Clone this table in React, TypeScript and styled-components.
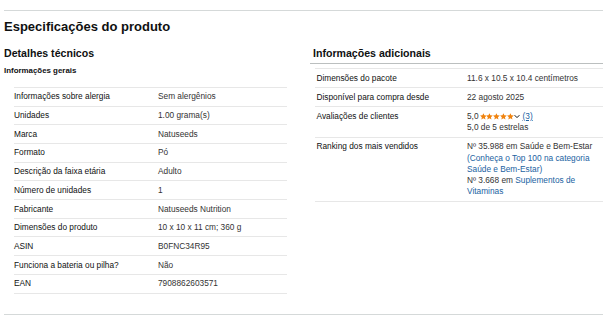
import React from "react";
import styled, { createGlobalStyle } from "styled-components";

const Global = createGlobalStyle`
  html, body { margin: 0; padding: 0; background: #ffffff; }
  body { font-family: "Liberation Sans", Arial, sans-serif; color: #0f1111; }
`;

const Page = styled.div`
  padding: 10px 9px 0 4px;
`;

const Rule = styled.div<{ $gap?: number }>`
  border-top: 1px solid #d5d9d9;
  margin-top: ${(p) => p.$gap ?? 0}px;
`;

const Title = styled.h2`
  margin: 7.5px 0 0 0;
  font-size: 13px;
  line-height: 16px;
  font-weight: 700;
  color: #0f1111;
`;

const Columns = styled.div`
  display: grid;
  grid-template-columns: 296px 1fr;
  column-gap: 10px;
  align-items: start;
`;

const Column = styled.section``;

const SectionHeading = styled.h3<{ $underline?: boolean }>`
  margin: 12.3px 0 0 0;
  font-size: 10.6px;
  line-height: 13px;
  font-weight: 700;
  color: #0f1111;
  ${(p) =>
    p.$underline
      ? `padding: 0 0 3.2px 3px; border-bottom: 1px solid #bbbfbf;`
      : ``}
`;

const SubHeading = styled.h4`
  margin: 6.5px 0 0 0;
  font-size: 7.9px;
  line-height: 10px;
  font-weight: 700;
  color: #0f1111;
`;

const Table = styled.table<{ $indent: number; $labelWidth: number; $top: number }>`
  border-collapse: collapse;
  margin-left: ${(p) => p.$indent}px;
  margin-top: ${(p) => p.$top}px;
  width: calc(100% - ${(p) => p.$indent}px);
  table-layout: fixed;
  border-bottom: 1px solid #e7e7e7;
  col.label { width: ${(p) => p.$labelWidth}px; }
`;

const Row = styled.tr`
  border-top: 1px solid #e7e7e7;
`;

const Label = styled.th<{ $pad?: number }>`
  text-align: left;
  vertical-align: top;
  font-weight: 400;
  font-size: 8.3px;
  line-height: 10.7px;
  color: #0f1111;
  padding: 3.4px 0 3.6px ${(p) => p.$pad ?? 0}px;
  white-space: nowrap;
`;

const Value = styled.td`
  vertical-align: top;
  font-size: 8.3px;
  line-height: 10.7px;
  color: #333333;
  padding: 3.4px 0 3.6px 0;
`;

const RLabel = styled(Label)`
  line-height: 11.2px;
  padding-top: 3.6px;
  padding-bottom: 3.4px;
`;

const RValue = styled(Value)`
  line-height: 11.2px;
  padding-top: 3.6px;
  padding-bottom: 3.4px;
`;

const Line = styled.div`
  display: block;
  white-space: nowrap;
`;

const RatingLine = styled.div`
  display: flex;
  align-items: center;
  white-space: nowrap;
  height: 11.2px;
`;

const Stars = styled.span`
  display: inline-flex;
  margin-left: 1px;
`;

const Chevron = styled.svg`
  margin: 0 2.5px 0 0.5px;
`;

const Link = styled.a<{ $underline?: boolean }>`
  color: #2162a1;
  text-decoration: ${(p) => (p.$underline ? "underline" : "none")};
  cursor: pointer;
`;

const Star = () => (
  <svg width="6.8" height="6.8" viewBox="1 1.5 22 21">
    <polygon
      points="12,1.5 15.1,8.6 22.8,9.3 17,14.4 18.7,22 12,18 5.3,22 7,14.4 1.2,9.3 8.9,8.6"
      fill="#f0830e"
    />
  </svg>
);

const left: [string, string][] = [
  ["Informações sobre alergia", "Sem alergênios"],
  ["Unidades", "1.00 grama(s)"],
  ["Marca", "Natuseeds"],
  ["Formato", "Pó"],
  ["Descrição da faixa etária", "Adulto"],
  ["Número de unidades", "1"],
  ["Fabricante", "Natuseeds Nutrition"],
  ["Dimensões do produto", "10 x 10 x 11 cm; 360 g"],
  ["ASIN", "B0FNC34R95"],
  ["Funciona a bateria ou pilha?", "Não"],
  ["EAN", "7908862603571"],
];

export default function App() {
  return (
    <Page>
      <Global />
      <Rule />
      <Title>Especificações do produto</Title>
      <Columns>
        <Column>
          <SectionHeading>Detalhes técnicos</SectionHeading>
          <SubHeading>Informações gerais</SubHeading>
          <Table $indent={10} $labelWidth={144} $top={10.7} style={{ width: 273 }}>
            <colgroup>
              <col className="label" />
              <col />
            </colgroup>
            <tbody>
              {left.map(([k, v]) => (
                <Row key={k}>
                  <Label>{k}</Label>
                  <Value>{v}</Value>
                </Row>
              ))}
            </tbody>
          </Table>
        </Column>
        <Column>
          <SectionHeading $underline>Informações adicionais</SectionHeading>
          <Table $indent={5} $labelWidth={152} $top={4}>
            <colgroup>
              <col className="label" />
              <col />
            </colgroup>
            <tbody>
              <Row>
                <RLabel $pad={1.5}>Dimensões do pacote</RLabel>
                <RValue>11.6 x 10.5 x 10.4 centímetros</RValue>
              </Row>
              <Row>
                <RLabel $pad={1.5}>Disponível para compra desde</RLabel>
                <RValue>22 agosto 2025</RValue>
              </Row>
              <Row>
                <RLabel $pad={1.5}>Avaliações de clientes</RLabel>
                <RValue>
                  <RatingLine>
                    <span>5,0</span>
                    <Stars>
                      <Star />
                      <Star />
                      <Star />
                      <Star />
                      <Star />
                    </Stars>
                    <Chevron width="6" height="5" viewBox="0 0 6 5">
                      <polyline points="0.6,1.2 3,3.6 5.4,1.2" fill="none" stroke="#0f1111" strokeWidth="1" />
                    </Chevron>
                    <Link $underline>(3)</Link>
                  </RatingLine>
                  <Line>5,0 de 5 estrelas</Line>
                </RValue>
              </Row>
              <Row>
                <RLabel $pad={1.5}>Ranking dos mais vendidos</RLabel>
                <RValue>
                  <Line>Nº 35.988 em Saúde e Bem-Estar</Line>
                  <Line>
                    <Link>(Conheça o Top 100 na categoria</Link>
                  </Line>
                  <Line>
                    <Link>Saúde e Bem-Estar)</Link>
                  </Line>
                  <Line>
                    Nº 3.668 em <Link>Suplementos de</Link>
                  </Line>
                  <Line>
                    <Link>Vitaminas</Link>
                  </Line>
                </RValue>
              </Row>
            </tbody>
          </Table>
        </Column>
      </Columns>
      <Rule $gap={20} />
    </Page>
  );
}
